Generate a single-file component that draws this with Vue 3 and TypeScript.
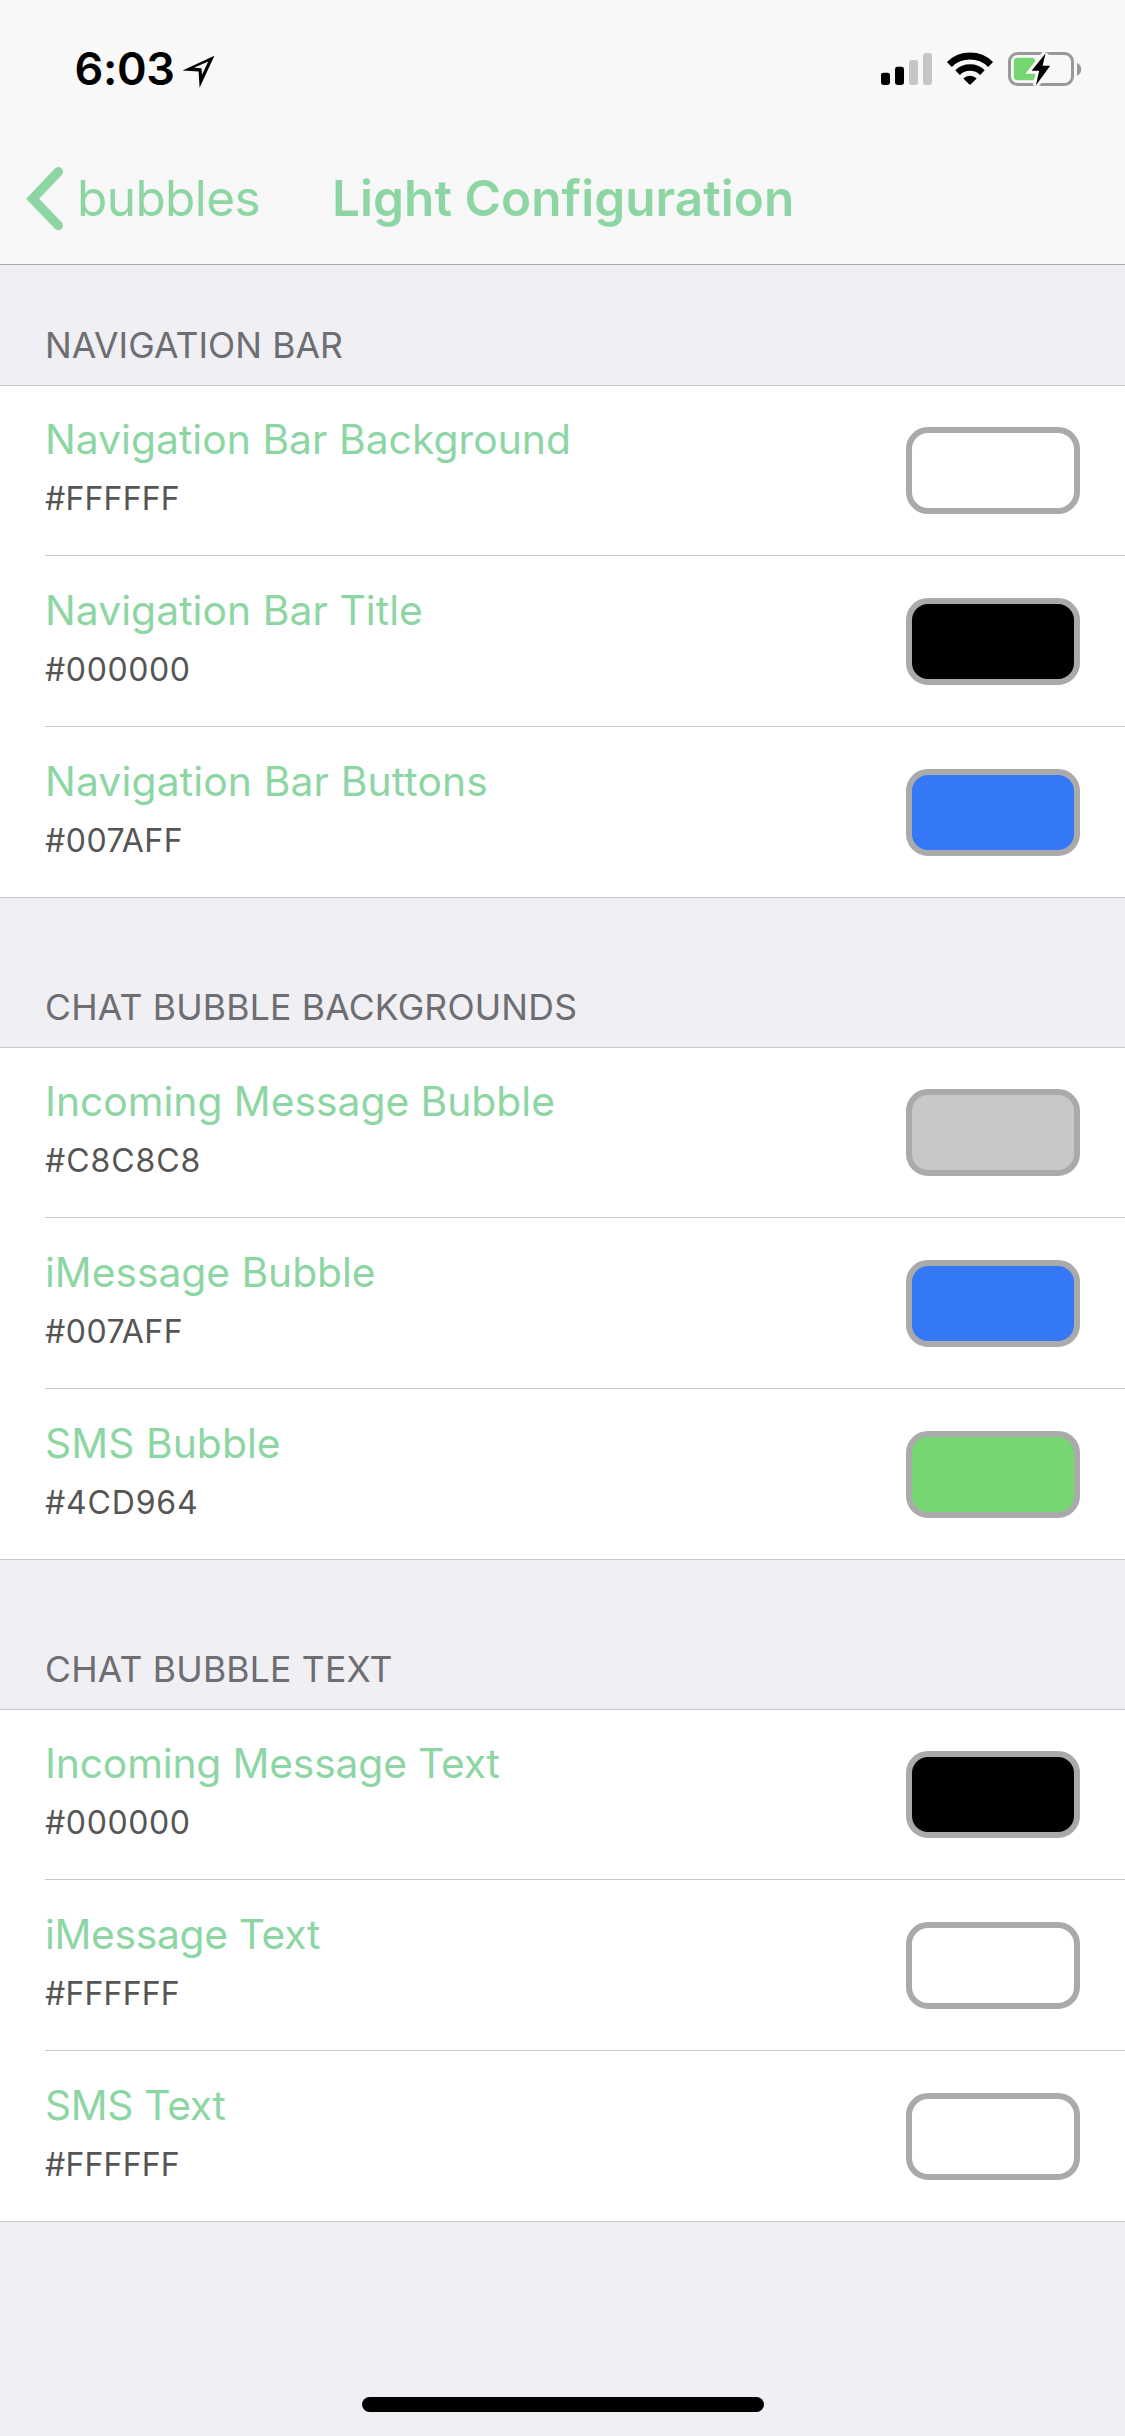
<script setup lang="ts">
interface ColorSetting {
  label: string
  hex: string
  swatch: string
  labelTracking: number
  hexTracking: number
}

interface Section {
  title: string
  tracking: number
  settings: ColorSetting[]
}

const item = (
  label: string,
  hex: string,
  swatch: string,
  labelTracking: number,
  hexTracking: number,
): ColorSetting => ({ label, hex, swatch, labelTracking, hexTracking })

const sections: Section[] = [
  {
    title: 'NAVIGATION BAR',
    tracking: 0.08,
    settings: [
      item('Navigation Bar Background', '#FFFFFF', '#ffffff', 0.03, 0.18),
      item('Navigation Bar Title', '#000000', '#000000', 0.06, 0.6),
      item('Navigation Bar Buttons', '#007AFF', '#3478f7', 0.15, 0.52),
    ],
  },
  {
    title: 'CHAT BUBBLE BACKGROUNDS',
    tracking: 0.21,
    settings: [
      item('Incoming Message Bubble', '#C8C8C8', '#c8c8c8', -0.02, 0.92),
      item('iMessage Bubble', '#007AFF', '#3478f7', -0.04, 0.52),
      item('SMS Bubble', '#4CD964', '#76d672', 0.06, 0.82),
    ],
  },
  {
    title: 'CHAT BUBBLE TEXT',
    tracking: 0.22,
    settings: [
      item('Incoming Message Text', '#000000', '#000000', -0.17, 0.6),
      item('iMessage Text', '#FFFFFF', '#ffffff', -0.33, 0.18),
      item('SMS Text', '#FFFFFF', '#ffffff', -0.33, 0.18),
    ],
  },
]

const px = (n: number) => ({ letterSpacing: `${n}px` })
</script>

<template>
  <div class="screen">
    <header class="top">
      <div class="status">
        <div class="clock">
          <span class="time">6:03</span>
          <svg class="location" width="34" height="34" viewBox="0 0 34 34">
            <path
              fill-rule="evenodd"
              d="M32.4 0.8 L0.5 15.6 L16.6 16.4 L17.6 32.8 Z M26.2 6.4 L20 19.8 L19.5 13.2 L12 12.8 Z"
            />
          </svg>
        </div>
        <div class="indicators">
          <svg width="52" height="36" viewBox="880 51 52 36">
            <rect x="881" y="72.7" width="9" height="12.3" rx="2.4" />
            <rect x="895" y="66.8" width="9" height="18.2" rx="2.4" />
            <rect x="909" y="60" width="9" height="25" rx="2.4" fill="#c6c6c6" />
            <rect x="923" y="53" width="9" height="32" rx="2.4" fill="#c6c6c6" />
          </svg>
          <svg width="48" height="36" viewBox="946 51 48 36">
            <g fill="none" stroke="#000">
              <path stroke-width="7" d="M949.4 64.4 A29.5 29.5 0 0 1 990.6 64.4" />
              <path stroke-width="6.6" d="M957.6 72.6 A17.8 17.8 0 0 1 982.4 72.6" />
            </g>
            <path d="M963.3 78.4 A9.6 9.6 0 0 1 976.7 78.4 L970 85.1 Z" />
          </svg>
          <svg width="76" height="38" viewBox="1007 50 76 38">
            <rect x="1009.5" y="53.5" width="63" height="31" rx="8" fill="none" stroke="#999" stroke-width="3" />
            <path d="M1077 63 C1079.8 64 1081.2 66.4 1081.2 69.3 C1081.2 72.2 1079.8 74.7 1077 75.7 Z" fill="#999" />
            <rect x="1013.8" y="57.8" width="21.4" height="22.4" rx="3.6" fill="#76d672" />
            <path
              d="M1045.6 53.2 L1031.6 70.8 L1039.2 70.8 L1035.8 85.4 L1050.2 65.8 L1042.6 65.8 Z"
              stroke="#f9f9f9"
              stroke-width="6"
              stroke-linejoin="miter"
              paint-order="stroke"
            />
          </svg>
        </div>
      </div>
      <nav class="nav">
        <a class="back">
          <svg width="40" height="66" viewBox="25 166 40 66">
            <path d="M58.3 171.7 L32.6 198.7 L58.3 225.5" />
          </svg>
          <span>bubbles</span>
        </a>
        <h1>Light Configuration</h1>
      </nav>
    </header>

    <main>
      <section v-for="section in sections" :key="section.title" class="section">
        <h2 :style="px(section.tracking)">{{ section.title }}</h2>
        <ul>
          <li v-for="s in section.settings" :key="s.label">
            <div class="text">
              <span class="label" :style="px(s.labelTracking)">{{ s.label }}</span>
              <span class="hex" :style="px(s.hexTracking)">{{ s.hex }}</span>
            </div>
            <span class="swatch" :style="{ backgroundColor: s.swatch }"></span>
          </li>
        </ul>
      </section>
    </main>

    <footer><span class="home"></span></footer>
  </div>
</template>

<style>
body {
  background: #efeff4;
}
</style>

<style scoped>
.screen {
  display: flex;
  flex-direction: column;
  width: 1125px;
  height: 2436px;
  background: #efeff4;
  font-family: Inter, 'Liberation Sans', sans-serif;
  overflow: hidden;
}

svg {
  display: block;
  flex: none;
}

.top {
  height: 265px;
  box-sizing: border-box;
  border-bottom: 1px solid #a7a7aa;
  background: linear-gradient(#f9f9f9, #f7f7f7);
}

.status {
  display: flex;
  justify-content: space-between;
  height: 168px;
  padding: 39px 42px 0 74.5px;
  box-sizing: border-box;
}

.clock {
  display: flex;
}

.time {
  font-size: 45px;
  font-weight: 600;
  line-height: 60px;
  letter-spacing: -0.34px;
}

.location {
  margin: 16px 0 0 7.5px;
}

.indicators {
  display: flex;
  align-items: flex-start;
  gap: 14px;
  padding-top: 12px;
}

.indicators svg:last-child {
  margin: -1px 0 0 -1px;
}

.nav {
  display: grid;
  grid-template-columns: 332px auto;
  color: #8dd6a4;
  font-size: 49.5px;
  line-height: 60px;
}

.back {
  display: flex;
  padding-left: 24.5px;
  letter-spacing: -0.6px;
}

.back svg {
  margin: -2px 12.5px 0 0;
}

.back path {
  fill: none;
  stroke: #8dd6a4;
  stroke-width: 9.4;
  stroke-linecap: round;
}

h1 {
  margin: 0;
  font-size: inherit;
  font-weight: 600;
  letter-spacing: 0.056px;
}

.section h2 {
  margin: 0;
  padding: 88px 0 17px 45px;
  color: #6d6d72;
  font-size: 35.5px;
  font-weight: 400;
  line-height: 44px;
  white-space: nowrap;
}

.section:first-child h2 {
  padding-top: 59px;
}

ul {
  margin: 0;
  padding: 0;
  list-style: none;
  background: #fff;
  box-shadow: inset 0 1px #c8c7cc, inset 0 -1px #c8c7cc;
}

li {
  display: flex;
  justify-content: space-between;
  align-items: center;
  height: 171px;
  box-sizing: border-box;
  margin-left: 45px;
  padding-right: 45px;
}

li:not(:last-child) {
  box-shadow: inset 0 -1px #c8c7cc;
}

.text {
  display: flex;
  flex-direction: column;
  align-self: flex-start;
  padding-top: 29px;
  white-space: nowrap;
}

.label {
  color: #8dd6a4;
  font-size: 40.8px;
  line-height: 50px;
}

.hex {
  margin-top: 15px;
  color: #555;
  font-size: 32px;
  line-height: 40px;
}

.swatch {
  width: 174px;
  height: 87px;
  box-sizing: border-box;
  border: 6px solid #aaa;
  border-radius: 22px;
}

footer {
  display: flex;
  justify-content: center;
  margin-top: auto;
  padding: 0 0 24px 1px;
}

.home {
  width: 402px;
  height: 15px;
  border-radius: 8px;
  background: #000;
}
</style>
